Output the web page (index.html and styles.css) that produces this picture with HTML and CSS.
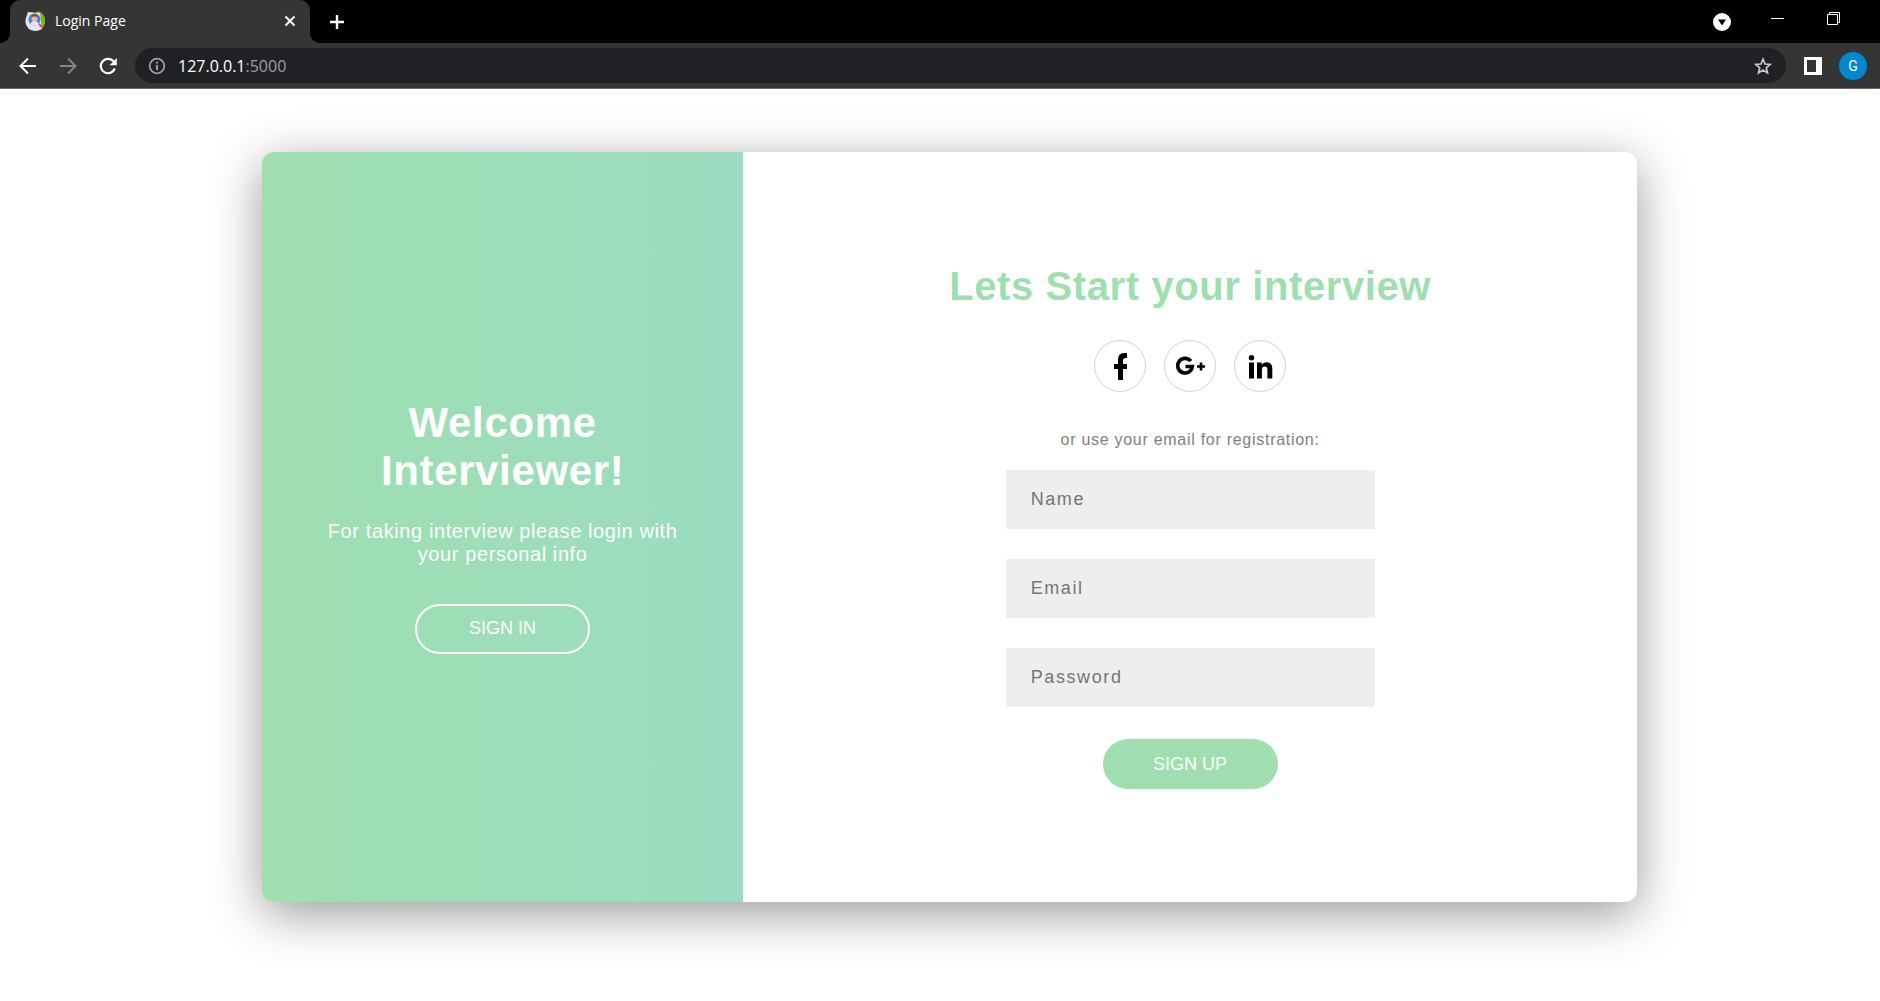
FILE: index.html
```html
<!DOCTYPE html>
<html lang="en">
<head>
<meta charset="utf-8">
<title>Login Page</title>
<meta name="viewport" content="width=device-width, initial-scale=1">
<link rel="stylesheet" href="styles.css">
</head>
<body>
<header class="browser">
  <div class="tab-strip">
    <div class="tab">
      <svg class="favicon" viewBox="0 0 20 20" aria-hidden="true">
        <path d="M10 0A10 10 0 0 1 19 15L14 19L12 0Z" fill="#7cb518"/>
        <path d="M3 1L15 2L17 18Q10 22 4 18Q-1 13 1 7Z" fill="#e4e6f2"/>
        <circle cx="9.500" cy="8.500" r="6" fill="#3f7fe8"/>
        <path d="M5.500 13Q6 10 9.500 10T13.500 13Q9.500 16 5.500 13Z" fill="#dfe8fb"/>
        <circle cx="9.500" cy="7.500" r="3" fill="#f3b694"/>
        <path d="M6.500 7Q6 3 9.500 3T12.500 7L11 5.500H8Z" fill="#8a4b32"/>
        <path d="M14 13L18 17" stroke="#e0523c" stroke-width="2"/>
      </svg>
      <span class="tab-title">Login Page</span>
      <button class="icon-button tab-close" type="button" aria-label="Close tab">
        <svg width="12" height="12" viewBox="0 0 12 12"><path d="M1.500 1.500L10.500 10.500M10.500 1.500L1.500 10.500" stroke="#fff" stroke-width="2"/></svg>
      </button>
    </div>
    <button class="icon-button new-tab" type="button" aria-label="New tab">
      <svg width="16" height="16" viewBox="0 0 16 16"><path d="M8 1V15M1 8H15" stroke="#fff" stroke-width="2.400"/></svg>
    </button>
    <div class="window-controls">
      <button class="icon-button" type="button" aria-label="Search tabs">
        <svg width="18" height="18" viewBox="0 0 18 18"><circle cx="9" cy="9" r="9" fill="#fff"/><path d="M5 6.500H13L9 12.500Z" fill="#000"/></svg>
      </button>
      <button class="icon-button raised" type="button" aria-label="Minimize">
        <svg width="13" height="13" viewBox="0 0 13 13"><path d="M0 6.500H13" stroke="#fff"/></svg>
      </button>
      <button class="icon-button raised" type="button" aria-label="Restore">
        <svg width="13" height="13" viewBox="0 0 13 13" fill="none" stroke="#fff"><path d="M.5 2.500H10.500V12.500H.5ZM2.500 2.500V.5H12.500V10.500H10.500"/></svg>
      </button>
    </div>
  </div>
  <div class="toolbar">
    <nav class="nav-buttons">
      <button class="icon-button" type="button" aria-label="Back">
        <svg width="18" height="18" viewBox="0 0 18 18" fill="none" stroke="#fff" stroke-width="2"><path d="M17 9H2M9 1.500L1.500 9L9 16.500"/></svg>
      </button>
      <button class="icon-button" type="button" aria-label="Forward">
        <svg width="18" height="18" viewBox="0 0 18 18" fill="none" stroke="#858585" stroke-width="2"><path d="M1 9H16M9 1.500L16.500 9L9 16.500"/></svg>
      </button>
      <button class="icon-button" type="button" aria-label="Reload">
        <svg width="18" height="18" viewBox="0 0 18 18"><path d="M15.800 11.500A7.200 7.200 0 1 1 14 3.800L16 6" fill="none" stroke="#fff" stroke-width="2.200"/><path d="M17.800 1V8.200H10.600Z" fill="#fff"/></svg>
      </button>
    </nav>
    <div class="address-bar">
      <svg width="18" height="18" viewBox="0 0 18 18" aria-hidden="true"><circle cx="9" cy="9" r="7.300" fill="none" stroke="#9aa0a6" stroke-width="1.800"/><path d="M9 8V13M9 4.800V6.600" stroke="#9aa0a6" stroke-width="2"/></svg>
      <span class="url">127.0.0.1<span class="port">:5000</span></span>
      <button class="icon-button" type="button" aria-label="Bookmark this page">
        <svg width="18" height="18" viewBox="0 0 18 18"><path d="M9 2.200L11 7L16.200 7.400L12.300 10.800L13.500 15.900L9 13.100L4.500 15.900L5.700 10.800L1.800 7.400L7 7Z" fill="none" stroke="#c7c7c7" stroke-width="1.700"/></svg>
      </button>
    </div>
    <button class="icon-button" type="button" aria-label="Side panel">
      <svg width="18" height="18" viewBox="0 0 18 18"><path d="M0 0H18V18H0ZM3 3V15H12V3Z" fill="#fff" fill-rule="evenodd"/></svg>
    </button>
    <button class="profile" type="button" aria-label="Profile G">G</button>
  </div>
</header>

<main class="page">
  <div class="card">
    <section class="welcome">
      <h1 class="welcome-title">Welcome Interviewer!</h1>
      <p class="welcome-text">For taking interview please login with your personal info</p>
      <button class="pill pill-outline" type="button">SIGN IN</button>
    </section>
    <section class="register">
      <h2 class="register-title">Lets Start your interview</h2>
      <div class="social">
        <a class="social-link" href="#" aria-label="Facebook">
          <svg viewBox="0 0 50 50"><path d="M23 39V28H19V23H23V19Q23 12 29 12H32V17H30Q28 17 28 19.500V23H32V28H28V39Z"/></svg>
        </a>
        <a class="social-link" href="#" aria-label="Google Plus">
          <svg viewBox="0 0 50 50"><path d="M25.800 20.200A7.300 7.300 0 1 0 27.300 25.500H20.500" fill="none" stroke="#000" stroke-width="3.600"/><path d="M36 21.500V29.500M32 25.500H40" stroke="#000" stroke-width="2.600"/></svg>
        </a>
        <a class="social-link" href="#" aria-label="LinkedIn">
          <svg viewBox="0 0 50 50"><circle cx="16.500" cy="16.700" r="2.700"/><path d="M14 21.500H19V37.500H14ZM22 21.500H26.700V23.700Q28 21.200 31.300 21.200Q37.300 21.200 37.300 28V37.500H32.400V29Q32.400 25.600 29.800 25.600Q26.900 25.600 26.900 29V37.500H22Z"/></svg>
        </a>
      </div>
      <p class="register-hint">or use your email for registration:</p>
      <form class="form">
        <input class="field" type="text" placeholder="Name" aria-label="Name">
        <input class="field" type="email" placeholder="Email" aria-label="Email">
        <input class="field" type="password" placeholder="Password" aria-label="Password">
        <button class="pill pill-solid" type="submit">SIGN UP</button>
      </form>
    </section>
  </div>
</main>
</body>
</html>
```
FILE: styles.css
```css
* {
  box-sizing: border-box;
}

body {
  display: flex;
  flex-direction: column;
  min-height: 100vh;
  margin: 0;
  background: #fff;
  font-family: "Liberation Sans", Arial, sans-serif;
}

h1, h2, p {
  margin: 0;
}

button, input {
  font-family: inherit;
}

svg {
  display: block;
}

/* Browser frame */
.browser {
  font-family: "Open Sans", "Noto Sans", sans-serif;
}

.icon-button {
  display: block;
  padding: 0;
  border: 0;
  background: none;
}

.tab-strip {
  display: flex;
  height: 43px;
  padding-left: 10px;
  background: #000;
}

.tab {
  position: relative;
  display: flex;
  align-items: center;
  width: 300px;
  padding: 0 14px 2px 15px;
  border-radius: 10px 10px 0 0;
  background: #353535;
}

/* Curved feet where the tab meets the toolbar */
.tab::before,
.tab::after {
  content: "";
  position: absolute;
  bottom: 0;
  width: 10px;
  height: 10px;
}

.tab::before {
  left: -10px;
  background: radial-gradient(circle at 0 0, #000 10px, #353535 10px);
}

.tab::after {
  right: -10px;
  background: radial-gradient(circle at 100% 0, #000 10px, #353535 10px);
}

.favicon {
  width: 20px;
  height: 20px;
}

.tab-title {
  flex: 1;
  padding-left: 10px;
  color: #fff;
  font-size: 14px;
  line-height: 20px;
}

.new-tab {
  margin-left: 19px;
}

.window-controls {
  display: flex;
  align-items: center;
  gap: 40px;
  margin-left: auto;
  padding-right: 40px;
}

.window-controls .raised {
  margin-bottom: 6px;
}

.window-controls .raised + .raised {
  margin-left: 3px;
}

.toolbar {
  display: flex;
  align-items: center;
  height: 46px;
  padding: 0 13px 0 19px;
  border-bottom: 1px solid #6a6a6a;
  background: #353535;
}

.nav-buttons {
  display: flex;
  gap: 22px;
  margin-right: 18px;
}

.address-bar {
  display: flex;
  flex: 1;
  align-items: center;
  height: 35px;
  margin-right: 18px;
  padding: 0 14px 0 13px;
  border-radius: 18px;
  background: #202124;
}

.url {
  flex: 1;
  padding-left: 12px;
  color: #fff;
  font-size: 16px;
  line-height: 22px;
}

.port {
  color: #9aa0a6;
}

.profile {
  width: 28px;
  height: 28px;
  margin-left: 17px;
  padding: 0;
  border: 0;
  border-radius: 50%;
  background: #0288d1;
  color: #fff;
  font-family: Roboto, sans-serif;
  font-size: 14px;
}

/* Login page */
.page {
  flex: 1;
  padding: 63px 0 63px 19px;
}

.card {
  display: flex;
  width: 74%;
  min-width: 900px;
  max-width: 1375px;
  min-height: 750px;
  margin: 0 auto;
  overflow: hidden;
  border-radius: 12px;
  background: #fff;
  box-shadow: 0 12px 50px rgba(0, 0, 0, 0.4);
}

.welcome {
  display: flex;
  flex-direction: column;
  align-items: center;
  justify-content: center;
  width: 35%;
  padding: 0 60px 2px;
  background: linear-gradient(to right, #9fdfaf, #9bdcc1);
  color: #fff;
  text-align: center;
}

.welcome-title {
  font-size: 42px;
  line-height: 48px;
  letter-spacing: 0.015em;
}

.welcome-text {
  margin: 25px 0 38px;
  font-size: 20px;
  line-height: 23px;
  letter-spacing: 0.03em;
}

.pill {
  width: 175px;
  height: 50px;
  padding: 0;
  border: 0;
  border-radius: 25px;
  color: #fff;
  font-size: 18px;
}

.pill-outline {
  border: 2px solid #fff;
  background: none;
}

.pill-solid {
  margin-top: 2px;
  background: #9fdfaf;
}

.register {
  display: flex;
  flex: 1;
  flex-direction: column;
  align-items: center;
  justify-content: center;
  padding-bottom: 2px;
}

.register-title {
  color: #9fdfaf;
  font-size: 40px;
  line-height: 46px;
  letter-spacing: 0.015em;
}

.social {
  display: flex;
  gap: 18px;
  margin: 31px 0 39px;
}

.social-link {
  width: 52px;
  height: 52px;
  border: 1px solid #d3d3d3;
  border-radius: 50%;
}

.register-hint {
  color: #808080;
  font-size: 16px;
  line-height: 18px;
  letter-spacing: 0.045em;
}

.form {
  display: flex;
  flex-direction: column;
  align-items: center;
  gap: 30px;
  margin-top: 21px;
}

.field {
  width: 369px;
  height: 59px;
  padding: 0 25px;
  border: 0;
  background: #eee;
  font-size: 18px;
  letter-spacing: 0.09em;
}

.field::placeholder {
  color: #757575;
}
```
